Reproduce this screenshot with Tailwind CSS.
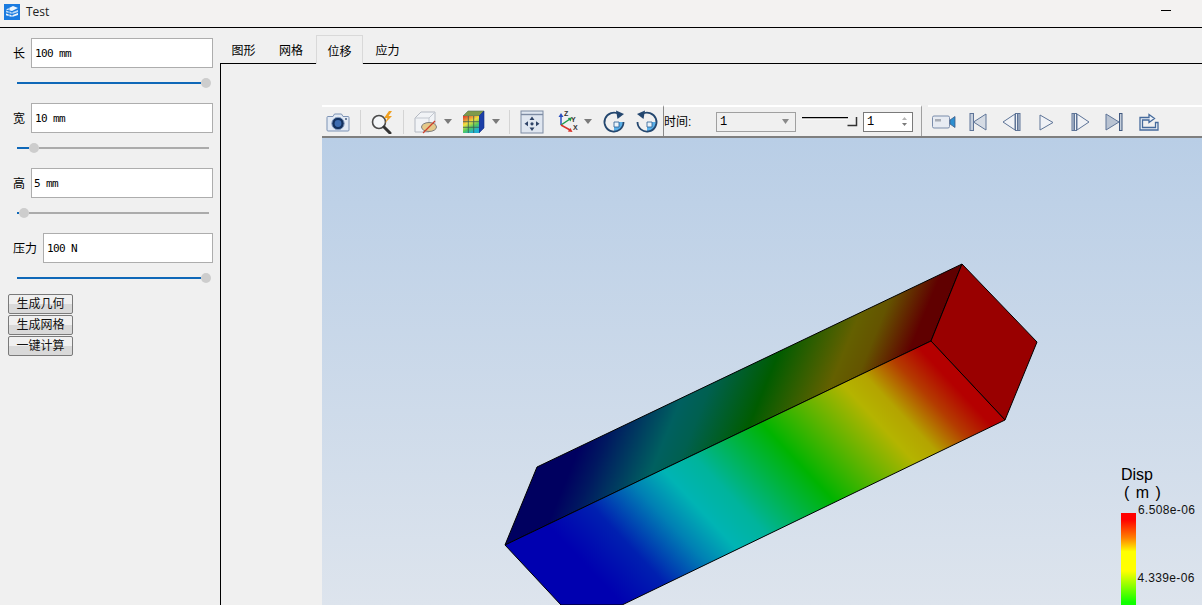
<!DOCTYPE html>
<html lang="en">
<head>
  <meta charset="UTF-8" />
  <title>Test</title>
  <script src="https://cdn.jsdelivr.net/npm/@tailwindcss/browser@4"></script>
</head>
<body class="bg-[#f0f0f0] font-['Liberation_Sans','Noto_Sans_CJK_SC',sans-serif] text-black">
  <div class="w-[1202px] h-[605px] overflow-hidden flex flex-col">

    <!-- title bar -->
    <div class="h-[28px] shrink-0 flex items-center bg-[#f3f2f1] border-b border-black">
      <svg class="ml-[4px] mb-[3px] w-[16px] h-[16px]" viewBox="0 0 16 16">
        <rect width="16" height="16" fill="#1a7be0"/>
        <path d="M2 5.5 L9 2 L14 4 L8 7Z" fill="#eef6fd"/>
        <path d="M2 6.5 L8 8.2 L14 6 V8 L8 10 L2 8.2Z" fill="#b9d9f7"/>
        <path d="M2 9.5 L8 11.2 L14 9 V11 L8 13 L2 11.2Z" fill="#eef6fd"/>
        <path d="M5 4 V12 M8 7 V13" stroke="#1a7be0" stroke-width=".7"/>
      </svg>
      <span class="ml-[6px] mb-[3px] text-[12px] font-['Open_Sans'] text-[#222]">Test</span>
      <div class="ml-auto mr-[31px] mb-[7px] w-[10px] h-px bg-black"></div>
    </div>

    <div class="flex flex-1 min-h-0">
      <!-- left controls -->
      <div class="w-[220px] shrink-0 pt-[10px] flex flex-col">
        <div class="flex items-center h-[30px] pl-[13px]">
          <span class="w-[18px] pt-[2px] text-[12px]">长</span>
          <div class="w-[182px] h-[30px] bg-white border border-[#adadad] flex items-center pl-[3px] pt-[2px] font-['DejaVu_Sans_Mono'] text-[11px] tracking-[-0.6px]">100 mm</div>
        </div>
        <div class="mt-[10px] ml-[17px] w-[194px] h-[10px] flex items-center">
          <div class="w-[184px] h-[2px] bg-[#0f68b8]"></div>
          <div class="w-[10px] h-[10px] rounded-full bg-[#cdcdcd] shrink-0"></div>
        </div>

        <div class="mt-[15px] flex items-center h-[30px] pl-[13px]">
          <span class="w-[18px] pt-[2px] text-[12px]">宽</span>
          <div class="w-[182px] h-[30px] bg-white border border-[#adadad] flex items-center pl-[3px] pt-[2px] font-['DejaVu_Sans_Mono'] text-[11px] tracking-[-0.6px]">10 mm</div>
        </div>
        <div class="mt-[10px] ml-[17px] w-[194px] h-[10px] flex items-center">
          <div class="w-[12px] h-[2px] bg-[#0f68b8]"></div>
          <div class="w-[10px] h-[10px] rounded-full bg-[#cdcdcd] shrink-0"></div>
          <div class="flex-1 mr-[2px] h-[2px] bg-[#ababab]"></div>
        </div>

        <div class="mt-[15px] flex items-center h-[30px] pl-[13px]">
          <span class="w-[18px] pt-[2px] text-[12px]">高</span>
          <div class="w-[182px] h-[30px] bg-white border border-[#adadad] flex items-center pl-[2px] pt-[2px] font-['DejaVu_Sans_Mono'] text-[11px] tracking-[-0.6px]">5 mm</div>
        </div>
        <div class="mt-[10px] ml-[17px] w-[194px] h-[10px] flex items-center">
          <div class="w-[2px] h-[2px] bg-[#0f68b8]"></div>
          <div class="w-[10px] h-[10px] rounded-full bg-[#cdcdcd] shrink-0"></div>
          <div class="flex-1 mr-[2px] h-[2px] bg-[#ababab]"></div>
        </div>

        <div class="mt-[15px] flex items-center h-[30px] pl-[13px]">
          <span class="w-[30px] pt-[2px] text-[12px]">压力</span>
          <div class="w-[170px] h-[30px] bg-white border border-[#adadad] flex items-center pl-[3px] pt-[2px] font-['DejaVu_Sans_Mono'] text-[11px] tracking-[-0.6px]">100 N</div>
        </div>
        <div class="mt-[10px] ml-[17px] w-[194px] h-[10px] flex items-center">
          <div class="w-[184px] h-[2px] bg-[#0f68b8]"></div>
          <div class="w-[10px] h-[10px] rounded-full bg-[#cdcdcd] shrink-0"></div>
        </div>

        <div class="mt-[11px] ml-[8px] flex flex-col gap-px">
          <button class="w-[65px] h-[20px] border border-[#7a7a7a] rounded-[2px] bg-[linear-gradient(#f0f0f0_50%,#d9d9d9_50%)] text-[12px] leading-none text-[#111]">生成几何</button>
          <button class="w-[65px] h-[20px] border border-[#7a7a7a] rounded-[2px] bg-[linear-gradient(#f0f0f0_50%,#d9d9d9_50%)] text-[12px] leading-none text-[#111]">生成网格</button>
          <button class="w-[65px] h-[20px] border border-[#7a7a7a] rounded-[2px] bg-[linear-gradient(#f0f0f0_50%,#d9d9d9_50%)] text-[12px] leading-none text-[#111]">一键计算</button>
        </div>
      </div>

      <!-- tabs and result pane -->
      <div class="flex-1 min-w-0 flex flex-col">
        <div class="h-[36px] shrink-0 flex items-end border-b border-black text-[12px] pl-[1px]">
          <div class="w-[45px] h-[28px] pt-[4px] flex items-center justify-center">图形</div>
          <div class="w-[50px] h-[28px] pt-[4px] flex items-center justify-center">网格</div>
          <div class="w-[47px] h-[29px] -mb-px pt-[4px] flex items-center justify-center border border-b-0 border-[#d9d9d9] bg-[#f0f0f0]">位移</div>
          <div class="w-[49px] h-[28px] pt-[4px] flex items-center justify-center">应力</div>
        </div>

        <div class="flex-1 min-h-0 border-l border-black pl-[101px] pt-[41px] flex flex-col">
          <!-- toolbar -->
          <div class="h-[33px] shrink-0 flex border-b-2 border-[#7f7f7f]">
            <div class="w-[342px] shrink-0 flex items-center border-t-2 border-white border-r border-r-[#8a8a8a]">
              <svg class="ml-[4px] w-[24px] h-[24px]" viewBox="0 0 24 24">
                <path d="M2 6.5 H7 L8.5 4 H15.5 L17 6.5 H22 Q23 6.5 23 7.5 V20 Q23 21 22 21 H2 Q1 21 1 20 V7.5 Q1 6.5 2 6.5Z" fill="#e3eaf4" stroke="#7d93b5"/>
                <circle cx="12" cy="13.5" r="6.2" fill="#13315f" stroke="#8aa0c2"/>
                <circle cx="12" cy="13.5" r="3.4" fill="#3d6cb0"/>
                <circle cx="20" cy="9" r="1" fill="#4a5f80"/>
              </svg>
              <div class="ml-[10px] w-px h-[24px] bg-[#d4d4d4]"></div>
              <svg class="ml-[9px] w-[24px] h-[24px]" viewBox="0 0 24 24">
                <circle cx="9" cy="12" r="6.5" fill="#f4f6f8" stroke="#4a4a4a" stroke-width="1.6"/>
                <path d="M14 17 L20 23" stroke="#333" stroke-width="3" stroke-linecap="round"/>
                <path d="M19 1 L14 8 H17.5 L15 13 L22 6 H18.5 L22 1Z" fill="#f0a020"/>
              </svg>
              <div class="ml-[9px] w-px h-[24px] bg-[#d4d4d4]"></div>
              <svg class="ml-[10px] w-[24px] h-[24px]" viewBox="0 0 24 24">
                <path d="M1 8 L7 2 H21 V16 L15 22 H1Z" fill="#f1f3f6" stroke="#b4b9c2"/>
                <path d="M1 8 H15 V22 M15 8 L21 2" fill="none" stroke="#c2c7cf"/>
                <ellipse cx="15" cy="17" rx="7.5" ry="4.5" fill="#e4c98a" stroke="#7d7d7d"/>
                <path d="M9 23 L21 11" stroke="#d0402a" stroke-width="1.3"/>
              </svg>
              <svg class="ml-[6px] w-[8px] h-[5px]" viewBox="0 0 8 5"><path d="M0 0 H8 L4 5Z" fill="#7a7a7a"/></svg>
              <svg class="ml-[9px] w-[24px] h-[24px]" viewBox="0 0 24 24">
                <defs>
                  <linearGradient id="cubefront" x1="0" y1="0" x2="0.5" y2="1">
                    <stop offset="0" stop-color="#e0302a"/>
                    <stop offset="0.45" stop-color="#f0e040"/>
                    <stop offset="0.75" stop-color="#50c860"/>
                    <stop offset="1" stop-color="#20b0d0"/>
                  </linearGradient>
                </defs>
                <path d="M2 6 L7 1 H23 L18 6Z" fill="#7f9a4a" stroke="#55705a" stroke-width=".6"/>
                <path d="M18 6 L23 1 V18 L18 23Z" fill="#1c3fa8" stroke="#152f80" stroke-width=".6"/>
                <rect x="2" y="6" width="16" height="17" fill="url(#cubefront)"/>
                <path d="M7.3 6 V23 M12.7 6 V23 M2 11.7 H18 M2 17.3 H18" stroke="#3a5a50" stroke-width=".8"/>
              </svg>
              <svg class="ml-[7px] w-[8px] h-[5px]" viewBox="0 0 8 5"><path d="M0 0 H8 L4 5Z" fill="#7a7a7a"/></svg>
              <div class="ml-[9px] w-px h-[24px] bg-[#d4d4d4]"></div>
              <svg class="ml-[10px] w-[24px] h-[24px]" viewBox="0 0 24 24">
                <rect x="1" y="1" width="22" height="22" fill="#dfe6f0" stroke="#7d8ba3"/>
                <path d="M1 4.5 H23" stroke="#7d8ba3" stroke-width="1.4"/>
                <path d="M12 6.5 L14.5 10 H9.5Z M12 21 L14.5 17.5 H9.5Z M4.5 13.8 L8 11.3 V16.3Z M19.5 13.8 L16 11.3 V16.3Z" fill="#2f4468"/>
                <circle cx="12" cy="13.8" r="1.6" fill="#2f4468"/>
              </svg>
              <svg class="ml-[11px] w-[24px] h-[24px]" viewBox="0 0 24 24">
                <path d="M6 15 V5" stroke="#2a4fc0" stroke-width="1.5"/><path d="M6 3 L8.5 7 H3.5Z" fill="#2a4fc0"/>
                <path d="M6 15 L15 9" stroke="#1c9a4a" stroke-width="1.5"/><path d="M17 7.5 L15.5 11.5 L12.8 8Z" fill="#1c9a4a"/>
                <path d="M6 15 L15 20" stroke="#d8322a" stroke-width="1.5"/><path d="M17.5 22 L12.8 21.5 L15.5 18Z" fill="#d8322a"/>
                <text x="9" y="6" font-size="7" font-family="Liberation Sans" font-weight="bold" fill="#333">Z</text>
                <text x="16" y="12" font-size="7" font-family="Liberation Sans" font-weight="bold" fill="#333">Y</text>
                <text x="18" y="20" font-size="7" font-family="Liberation Sans" font-weight="bold" fill="#333">X</text>
              </svg>
              <svg class="ml-[5px] w-[8px] h-[5px]" viewBox="0 0 8 5"><path d="M0 0 H8 L4 5Z" fill="#7a7a7a"/></svg>
              <svg class="ml-[10px] w-[24px] h-[24px]" viewBox="0 0 24 24">
                <path d="M12 12 H21 A9.5 9.5 0 0 1 12 22Z" fill="#5ab0e8"/>
                <path d="M12 12 H17 V17 H12Z" fill="#eaf4fb" stroke="#2a5a90" stroke-width=".8"/>
                <path d="M17 4 A9.5 9.5 0 1 0 21.5 12" fill="none" stroke="#24476f" stroke-width="1.8"/>
                <path d="M14 0.5 L22 4 L15.5 9Z" fill="#24476f"/>
              </svg>
              <svg class="ml-[9px] w-[24px] h-[24px]" viewBox="0 0 24 24">
                <path d="M12 12 H21 A9.5 9.5 0 0 1 12 22Z" fill="#5ab0e8"/>
                <path d="M12 12 H17 V17 H12Z" fill="#eaf4fb" stroke="#2a5a90" stroke-width=".8"/>
                <path d="M7 4 A9.5 9.5 0 1 1 2.5 12" fill="none" stroke="#24476f" stroke-width="1.8"/>
                <path d="M10 0.5 L2 4 L8.5 9Z" fill="#24476f"/>
              </svg>
            </div>

            <div class="w-[258px] shrink-0 flex items-center border-t-2 border-white border-r border-r-[#a0a0a0]">
              <span class="w-[30px] text-[12px] leading-none">时间:</span>
              <div class="ml-[22px] w-[80px] h-[20px] border border-[#a0a0a0] flex items-center pl-[3px] font-['Liberation_Mono'] text-[12px]">
                1
                <svg class="ml-auto mr-[6px] w-[7px] h-[5px]" viewBox="0 0 7 5"><path d="M0 0 H7 L3.5 5Z" fill="#8a8a8a"/></svg>
              </div>
              <svg class="ml-[6px] w-[56px] h-[20px]" viewBox="0 0 56 20">
                <rect x="0" y="5" width="46" height="1.5" fill="#000"/>
                <rect x="0" y="6.5" width="46" height="1" fill="#fff"/>
                <path d="M45.5 13.5 H54.5 V5" fill="none" stroke="#333" stroke-width="1.5"/>
              </svg>
              <div class="ml-[5px] w-[50px] h-[20px] bg-white border border-[#7a7a7a] flex items-center pl-[3px] font-['Liberation_Mono'] text-[12px]">
                1
                <div class="ml-auto mr-[5px] flex flex-col gap-[3px]">
                  <svg class="w-[5px] h-[3px]" viewBox="0 0 5 3"><path d="M0 3 H5 L2.5 0Z" fill="#b5b5b5"/></svg>
                  <svg class="w-[5px] h-[3px]" viewBox="0 0 5 3"><path d="M0 0 H5 L2.5 3Z" fill="#7a7a7a"/></svg>
                </div>
              </div>
            </div>

            <div class="ml-[6px] flex-1 flex items-center gap-[10px] pl-[4px] border-t-2 border-white">
              <svg class="w-[24px] h-[24px]" viewBox="0 0 24 24">
                <rect x="0.5" y="6" width="17" height="12" rx="1.5" fill="#e7ebf2" stroke="#7b8dab"/>
                <rect x="3" y="9" width="6" height="2.5" fill="#a8adb6"/>
                <path d="M18 10 L23 6.5 V17.5 L18 14Z" fill="#2d8fd0" stroke="#3c5a86" stroke-width=".8"/>
              </svg>
              <svg class="w-[24px] h-[24px]" viewBox="0 0 24 24">
                <rect x="4" y="3.5" width="3.5" height="17" fill="#c6cfdc" stroke="#5e7497"/>
                <path d="M7.5 12 L20 4 V20Z" fill="#d5dbe4" stroke="#5e7497"/>
              </svg>
              <svg class="w-[24px] h-[24px]" viewBox="0 0 24 24">
                <path d="M3 12 L15 4 V20Z" fill="#f0f2f6" stroke="#5e7497"/>
                <rect x="15.5" y="3.5" width="2" height="17" fill="#eef1f5" stroke="#5e7497"/>
                <rect x="18" y="3.5" width="2" height="17" fill="#c6cfdc" stroke="#5e7497"/>
              </svg>
              <svg class="w-[24px] h-[24px]" viewBox="0 0 24 24">
                <path d="M6 5 L19 12.5 L6 20Z" fill="#f0f2f6" stroke="#5e7497"/>
              </svg>
              <svg class="w-[24px] h-[24px]" viewBox="0 0 24 24">
                <rect x="4" y="3.5" width="2" height="17" fill="#c6cfdc" stroke="#5e7497"/>
                <rect x="6.5" y="3.5" width="2" height="17" fill="#eef1f5" stroke="#5e7497"/>
                <path d="M9 4 L21 12 L9 20Z" fill="#f0f2f6" stroke="#5e7497"/>
              </svg>
              <svg class="w-[24px] h-[24px]" viewBox="0 0 24 24">
                <path d="M4 4 L17 12 L4 20Z" fill="#b9c3d2" stroke="#5e7497"/>
                <rect x="17.5" y="3.5" width="2.5" height="17" fill="#c6cfdc" stroke="#40587f"/>
              </svg>
              <svg class="w-[24px] h-[24px]" viewBox="0 0 24 24" fill="none">
                <path d="M13 4.5 L18.5 8.5 L13 12.5 V10 H6.5 V17.5 H19.5 V12.5 H22 V20 H4 V7.5 H13Z" fill="#eef2f7" stroke="#456a9c" stroke-width="1.3"/>
              </svg>
            </div>
          </div>

          <!-- 3d viewport -->
          <div class="flex-1 min-h-0 bg-[linear-gradient(#b9cee6,#dde4ed)]">
            <svg class="block w-[880px] h-[467px]" viewBox="322 138 880 467">
              <defs>
                <linearGradient id="front" gradientUnits="userSpaceOnUse" x1="505" y1="545" x2="834" y2="237">
                  <stop offset="0.1" stop-color="#0000b0"/>
                  <stop offset="0.2" stop-color="#0020b0"/>
                  <stop offset="0.3" stop-color="#0080b4"/>
                  <stop offset="0.37" stop-color="#00b4b4"/>
                  <stop offset="0.44" stop-color="#00b49c"/>
                  <stop offset="0.6" stop-color="#00b400"/>
                  <stop offset="0.7" stop-color="#60b400"/>
                  <stop offset="0.79" stop-color="#b4b400"/>
                  <stop offset="0.84" stop-color="#b4a400"/>
                  <stop offset="0.91" stop-color="#b43c00"/>
                  <stop offset="0.97" stop-color="#b40000"/>
                </linearGradient>
                <linearGradient id="top" gradientUnits="userSpaceOnUse" x1="505" y1="545" x2="798" y2="665">
                  <stop offset="0.1" stop-color="#000060"/>
                  <stop offset="0.17" stop-color="#001860"/>
                  <stop offset="0.34" stop-color="#006060"/>
                  <stop offset="0.41" stop-color="#006050"/>
                  <stop offset="0.57" stop-color="#005c00"/>
                  <stop offset="0.76" stop-color="#646000"/>
                  <stop offset="0.83" stop-color="#645400"/>
                  <stop offset="0.95" stop-color="#600000"/>
                </linearGradient>
                <linearGradient id="bar" x1="0" y1="0" x2="0" y2="1">
                  <stop offset="0.07" stop-color="#ff0000"/>
                  <stop offset="0.27" stop-color="#ff8000"/>
                  <stop offset="0.42" stop-color="#ffff00"/>
                  <stop offset="0.63" stop-color="#ffff00"/>
                  <stop offset="0.97" stop-color="#10ff00"/>
                </linearGradient>
              </defs>
              <polygon points="505,545 537,467 962,264 931,341" fill="url(#top)" stroke="#000" stroke-width="1"/>
              <polygon points="931,341 962,264 1037,342 1005,420" fill="#990000" stroke="#000" stroke-width="1"/>
              <polygon points="505,545 931,341 1005,420 622,605 561,605" fill="url(#front)" stroke="#000" stroke-width="1"/>
              <rect x="1121" y="513" width="15" height="92" fill="url(#bar)"/>
              <text x="1121" y="480" font-size="16" font-family="Liberation Sans" fill="#000">Disp</text>
              <text x="1124" y="498" font-size="16" font-family="Liberation Sans" word-spacing="2" fill="#000">( m )</text>
              <text x="1138" y="514" font-size="12" letter-spacing=".35" font-family="Liberation Sans" fill="#111">6.508e-06</text>
              <text x="1137.5" y="582" font-size="12" letter-spacing=".35" font-family="Liberation Sans" fill="#111">4.339e-06</text>
            </svg>
          </div>
        </div>
      </div>
    </div>
  </div>
</body>
</html>
